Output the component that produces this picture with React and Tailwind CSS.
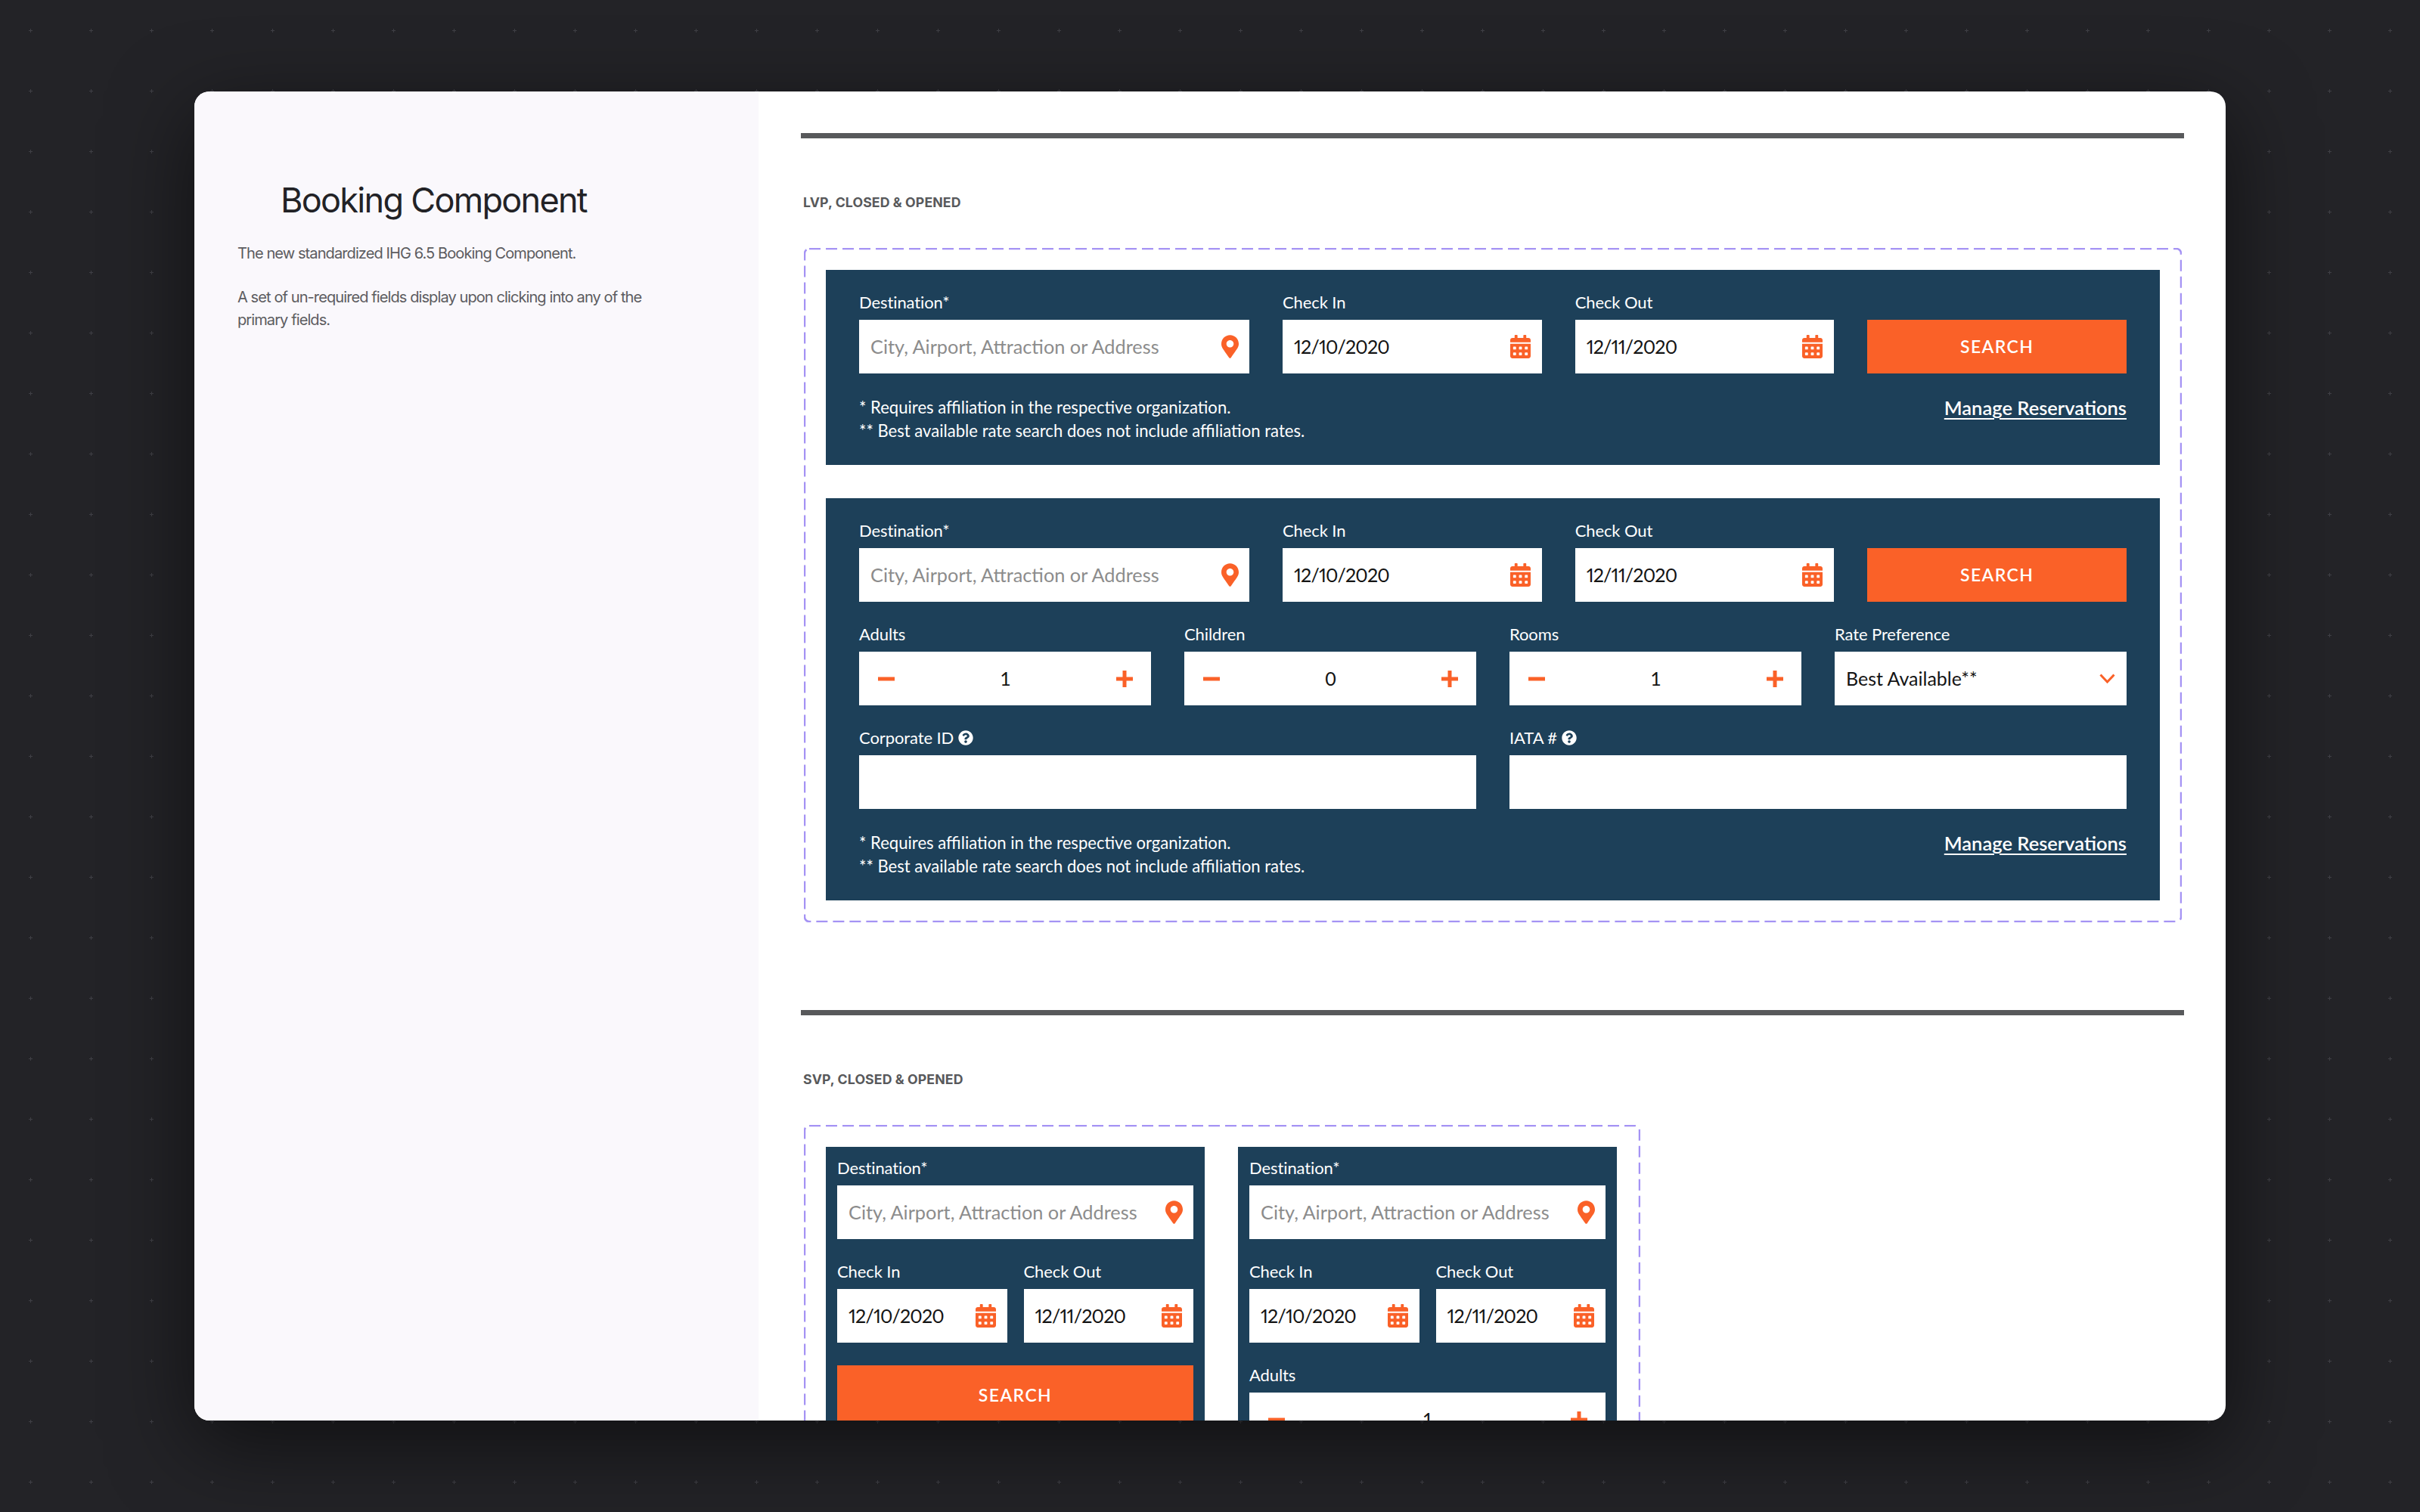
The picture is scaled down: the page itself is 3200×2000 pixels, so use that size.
import { FaCalendarAlt, FaMapMarkerAlt, FaQuestionCircle } from 'react-icons/fa';

const Label = ({ children, help }) => (
  <div className="flex items-center gap-[6px] h-[20px] mb-[13px] text-[22px] leading-[20px] text-white tracking-[-0.1px]">
    {children}
    {help && <FaQuestionCircle className="w-[20px] h-[20px] text-white" />}
  </div>
);

const Box = ({ className = '', children }) => (
  <div className={`flex items-center h-[71px] bg-white ${className}`}>{children}</div>
);

const Destination = () => (
  <div>
    <Label>Destination*</Label>
    <Box className="pl-[15px] pr-[14px] justify-between">
      <span className="text-[25.3px] text-[#8c8c8c]">City, Airport, Attraction or Address</span>
      <FaMapMarkerAlt className="w-[23px] h-[31px] text-[#fa6128]" />
    </Box>
  </div>
);

const DateField = ({ label, value }) => (
  <div>
    <Label>{label}</Label>
    <Box className="pl-[15px] pr-[15px] justify-between">
      <span className="text-[25px] tracking-[-0.8px] proportional-nums text-[#141414]">{value}</span>
      <FaCalendarAlt className="w-[27px] h-[31px] text-[#fa6128]" />
    </Box>
  </div>
);

const Stepper = ({ label, value }) => (
  <div>
    <Label>{label}</Label>
    <Box className="pl-[25px] pr-[24px] justify-between">
      <svg width="22" height="22" viewBox="0 0 22 22">
        <path d="M0 11h22" stroke="#fa6128" strokeWidth="5" />
      </svg>
      <span className="text-[25px] text-[#141414]">{value}</span>
      <svg width="22" height="22" viewBox="0 0 22 22">
        <path d="M0 11h22M11 0v22" stroke="#fa6128" strokeWidth="5" />
      </svg>
    </Box>
  </div>
);

const RateSelect = () => (
  <div>
    <Label>Rate Preference</Label>
    <Box className="pl-[15px] pr-[15px] justify-between">
      <span className="text-[25px] text-[#141414]">Best Available**</span>
      <svg width="21" height="13" viewBox="0 0 21 13" fill="none">
        <path d="M1.5 1.5l9 9.5 9-9.5" stroke="#fa6128" strokeWidth="3" />
      </svg>
    </Box>
  </div>
);

const SearchButton = ({ className = '' }) => (
  <button className={`block w-full bg-[#fa6128] text-white text-[23px] font-semibold tracking-[1.4px] ${className}`}>SEARCH</button>
);

const TextField = ({ label }) => (
  <div>
    <Label help>{label}</Label>
    <Box />
  </div>
);

const Notes = () => (
  <div className="flex justify-between mt-[29px] text-[22.1px] leading-[31px] text-white">
    <div>
      <div>* Requires affiliation in the respective organization.</div>
      <div>** Best available rate search does not include affiliation rates.</div>
    </div>
    <a className="self-start h-[30px] mt-[1px] font-semibold text-[25.5px] leading-[31px] underline underline-offset-[4px] decoration-[2px]">Manage Reservations</a>
  </div>
);

const TopRow = () => (
  <div className="grid grid-cols-[516px_1fr_1fr_1fr] gap-x-[44px]">
    <Destination />
    <DateField label="Check In" value="12/10/2020" />
    <DateField label="Check Out" value="12/11/2020" />
    <div className="pt-[33px]">
      <SearchButton className="h-[71px]" />
    </div>
  </div>
);

const DesktopClosed = () => (
  <div className="bg-[#1d4059] pt-[33px] pb-[30px] px-[44px]">
    <TopRow />
    <Notes />
  </div>
);

const DesktopOpened = () => (
  <div className="bg-[#1d4059] pt-[33px] pb-[30px] px-[44px]">
    <TopRow />
    <div className="grid grid-cols-4 gap-x-[44px] mt-[33px]">
      <Stepper label="Adults" value="1" />
      <Stepper label="Children" value="0" />
      <Stepper label="Rooms" value="1" />
      <RateSelect />
    </div>
    <div className="grid grid-cols-2 gap-x-[44px] mt-[33px]">
      <TextField label="Corporate ID" />
      <TextField label="IATA #" />
    </div>
    <Notes />
  </div>
);

const MobilePanel = ({ opened }) => (
  <div className="w-[501px] shrink-0 bg-[#1d4059] pt-[18px] px-[15px] flex flex-col gap-y-[33px]">
    <Destination />
    <div className="grid grid-cols-2 gap-x-[22px]">
      <DateField label="Check In" value="12/10/2020" />
      <DateField label="Check Out" value="12/11/2020" />
    </div>
    {opened ? <Stepper label="Adults" value="1" /> : <SearchButton className="h-[79px] -mt-[3px]" />}
  </div>
);

const DashedFrame = ({ className = '', children }) => (
  <div className={`relative p-[29px] ${className}`}>
    <svg className="absolute inset-0 w-full h-full pointer-events-none" fill="none">
      <rect x="1" y="1" width="calc(100% - 2px)" height="calc(100% - 2px)" rx="6" stroke="#a593f4" strokeWidth="2.5" strokeDasharray="15 7" />
    </svg>
    {children}
  </div>
);

const Section = ({ title, className = '', children }) => (
  <section className={className}>
    <div className="h-[7px] bg-[#58595b]" />
    <h2 className="mt-[75px] mb-[50px] ml-[3px] h-[20px] text-[17.7px] leading-[20px] tracking-[0.1px] font-bold text-[#58595b] font-['Inter',sans-serif]">{title}</h2>
    {children}
  </section>
);

export default function App() {
  return (
    <div className="relative w-[3200px] h-[2000px] overflow-hidden bg-[#232327] pl-[257px] pt-[121px] font-['Lato',sans-serif]">
      <svg className="absolute inset-0 w-full h-full" aria-hidden="true">
        <defs>
          <pattern id="crosses" x="0" y="0" width="80" height="80" patternUnits="userSpaceOnUse">
            <path d="M38 40.5h5M40.5 38v5" stroke="#3f3f45" strokeWidth="1" />
          </pattern>
        </defs>
        <rect width="100%" height="100%" fill="url(#crosses)" />
      </svg>

      <div className="relative flex w-[2686px] h-[1758px] overflow-hidden rounded-[20px] bg-white shadow-[0_30px_110px_rgba(0,0,0,0.55)]">
        <aside className="w-[746px] shrink-0 bg-[#faf8fc] pt-[117px] pl-[57px] font-['Inter',sans-serif]">
          <h1 className="ml-[57px] text-[45px] leading-[54px] tracking-[-1.7px] text-[#222226]">Booking Component</h1>
          <div className="mt-[28px] w-[560px] text-[20px] leading-[30px] tracking-[-0.9px] text-[#5c5c60]">
            <p>The new standardized IHG 6.5 Booking Component.</p>
            <p className="mt-[28px]">A set of un-required fields display upon clicking into any of the primary fields.</p>
          </div>
        </aside>

        <main className="flex-1 pt-[55px] pl-[56px]">
          <Section title="LVP, CLOSED & OPENED" className="w-[1829px]">
            <DashedFrame className="ml-[4px] w-[1822px]">
              <div className="flex flex-col gap-y-[44px]">
                <DesktopClosed />
                <DesktopOpened />
              </div>
            </DashedFrame>
          </Section>

          <Section title="SVP, CLOSED & OPENED" className="mt-[116px] w-[1829px]">
            <DashedFrame className="ml-[4px] w-[1106px]">
              <div className="flex gap-x-[44px]">
                <MobilePanel />
                <MobilePanel opened />
              </div>
            </DashedFrame>
          </Section>
        </main>
      </div>
    </div>
  );
}
